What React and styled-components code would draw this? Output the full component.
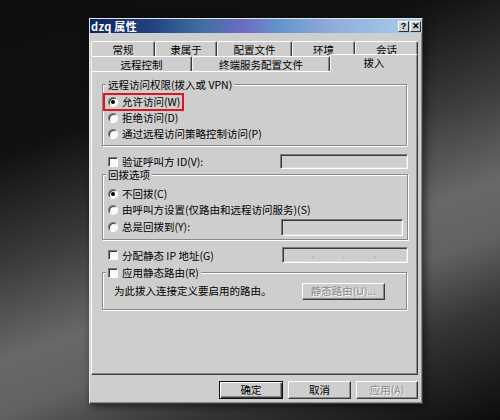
import React from 'react'
import styled, { createGlobalStyle, css } from 'styled-components'

const Global = createGlobalStyle`
  html, body { margin: 0; padding: 0; }
  #root { width: 500px; height: 420px; }
`;

const FACE = '#cecece';

const Desktop = styled.div`
  width: 500px;
  height: 420px;
  box-sizing: border-box;
  padding: 18px 0 0 89px;
  overflow: hidden;
  background: linear-gradient(160deg, #0e0e0e 0%, #111 26%, #3a3a3a 44%, #686868 60%, #626262 69%, #363636 81%, #0c0c0e 100%);
  font-family: "Noto Sans CJK SC", "Liberation Sans", sans-serif;
  font-size: 10.5px;
  color: #000;
`;

const Dialog = styled.div`
  width: 334px;
  height: 386px;
  box-sizing: border-box;
  background: ${FACE};
  border: 1px solid;
  border-color: #e6e6e6 #3c3c3c #3c3c3c #e6e6e6;
  box-shadow: inset -1px -1px 0 #888, 2px 3px 8px rgba(0, 0, 0, 0.55);
  display: flex;
  flex-direction: column;
`;

const TitleBar = styled.div`
  height: 14px;
  display: flex;
  align-items: center;
  padding: 0 1px 0 1px;
  background: linear-gradient(90deg, #0c2468 0%, #22407e 18%, #3f6fa4 34%, #6c6cc4 46%, #6497cf 58%, #8aa7d6 70%, #96b7de 80%, #a8cdee 100%);
`;

const Title = styled.span`
  flex: 1;
  color: #fff;
  font-weight: bold;
  font-size: 11px;
  line-height: 14px;
  letter-spacing: 0.3px;
`;

const CaptionButton = styled.span`
  width: 11px;
  height: 11px;
  box-sizing: border-box;
  background: ${FACE};
  border: 1px solid;
  border-color: #fff #303030 #303030 #fff;
  display: flex;
  align-items: center;
  justify-content: center;
  font-family: "Liberation Sans", sans-serif;
  font-weight: bold;
  font-size: 9px;
  line-height: 9px;
  margin-left: ${p => p.gap || 0}px;
`;

const Content = styled.div`
  flex: 1;
  display: flex;
  flex-direction: column;
  padding: 8px 4px 4px 1px;
`;

const TabRow = styled.div`
  display: flex;
  height: 15px;
`;

const Tab = styled.div`
  width: ${p => p.w}px;
  height: 15px;
  box-sizing: border-box;
  border-top: 1px solid #fff;
  border-left: 1px solid #f4f4f4;
  border-right: 1px solid #3a3a3a;
  border-radius: 2px 2px 0 0;
  box-shadow: inset -1px 0 0 #8a8a8a;
  display: flex;
  align-items: center;
  justify-content: center;
  line-height: 13px;
  padding-top: 1px;
  background: ${FACE};
  ${p => p.active && css`
    align-self: flex-start;
    height: 19px;
    margin-top: -2px;
    z-index: 1;
    align-items: flex-start;
    padding-top: 1px;
  `}
`;

const Panel = styled.div`
  height: 304px;
  box-sizing: border-box;
  border: 1px solid;
  border-color: #fff #3a3a3a #3a3a3a #fff;
  box-shadow: inset -1px -1px 0 #8a8a8a;
  padding: 12px 9px 0 10px;
  display: flex;
  flex-direction: column;
`;

const Group = styled.div`
  position: relative;
  height: ${p => p.h}px;
  box-sizing: border-box;
  margin-top: ${p => p.mt || 0}px;
  width: ${p => p.w || 305}px;
  border: 1px solid #8a8a8a;
  box-shadow: inset 1px 1px 0 #fff, 1px 1px 0 #fff;
  padding: ${p => p.pt}px 0 0 5px;
  display: flex;
  flex-direction: column;
`;

const GroupLabel = styled.div`
  position: absolute;
  top: -6px;
  left: 3px;
  height: 12px;
  padding: 0 2px;
  background: ${FACE};
  line-height: 12px;
  display: flex;
  align-items: center;
  gap: 4px;
`;

const Option = styled.div`
  display: flex;
  align-items: center;
  gap: 4px;
  height: ${p => p.h || 16}px;
  line-height: 14px;
  ${p => p.highlight && css`
    align-self: flex-start;
    height: 14px;
    border: 2px solid #e4141c;
    margin: -1px 0 -1px -5px;
    padding: 0 2px 0 3px;
  `}
`;

const Radio = styled.span`
  width: 10px;
  height: 10px;
  flex: none;
  box-sizing: border-box;
  border-radius: 50%;
  background: #fafafa;
  border: 1px solid;
  border-color: #7a7a7a #fff #fff #7a7a7a;
  box-shadow: inset 1px 1px 0 #3a3a3a;
  display: flex;
  align-items: center;
  justify-content: center;
  &::after {
    content: '';
    width: 4px;
    height: 4px;
    border-radius: 50%;
    background: ${p => (p.checked ? '#000' : 'transparent')};
  }
`;

const Check = styled.span`
  width: 10px;
  height: 10px;
  flex: none;
  box-sizing: border-box;
  background: #fafafa;
  border: 1px solid;
  border-color: #7a7a7a #fff #fff #7a7a7a;
  box-shadow: inset 1px 1px 0 #3a3a3a;
`;

const Row = styled.div`
  display: flex;
  align-items: center;
  height: ${p => p.h || 16}px;
  margin-top: ${p => p.mt || 0}px;
  padding-left: 6px;
  line-height: 13px;
`;

const RowText = styled.span`
  flex: 1;
  margin-left: ${p => (p.flush ? 0 : 4)}px;
`;

const Field = styled.div`
  width: ${p => p.w}px;
  height: ${p => p.h || 15}px;
  margin-right: ${p => p.mr || 0}px;
  box-sizing: border-box;
  background: ${FACE};
  border: 1px solid;
  border-color: #7a7a7a #fff #fff #7a7a7a;
  box-shadow: inset 1px 1px 0 #3a3a3a, inset -1px -1px 0 #dcdcdc;
  display: flex;
  align-items: center;
`;

const IpPart = styled.span`
  flex: 1;
  text-align: right;
  color: #9a9a9a;
  font-size: 9px;
  line-height: 10px;
  &:last-child { visibility: hidden; }
`;

const RouteRow = styled.div`
  display: flex;
  align-items: center;
  justify-content: space-between;
  height: 16px;
  padding: 0 21px 0 6px;
  line-height: 14px;
`;

const Button = styled.div`
  width: ${p => p.w}px;
  height: ${p => p.h || 18}px;
  box-sizing: border-box;
  background: ${FACE};
  border: 1px solid;
  border-color: #fff #3a3a3a #3a3a3a #fff;
  box-shadow: inset -1px -1px 0 #8a8a8a;
  display: flex;
  align-items: center;
  justify-content: center;
  line-height: 14px;
  ${p => p.primary && css`
    border-color: #111;
    box-shadow: inset 1px 1px 0 #fff, inset -1px -1px 0 #3a3a3a, inset -2px -2px 0 #8a8a8a;
  `}
  ${p => p.disabled && css`
    color: #8c8c8c;
    text-shadow: 1px 1px 0 #f4f4f4;
  `}
`;

const Footer = styled.div`
  display: flex;
  justify-content: flex-end;
  gap: 5px;
  margin-top: 6px;
`;

const topTabs = [
  ['常规', 64],
  ['隶属于', 62],
  ['配置文件', 75],
  ['环境', 63],
  ['会话', 63],
];

const bottomTabs = [
  ['远程控制', 101],
  ['终端服务配置文件', 138],
  ['拨入', 88, true],
];

const App = () => {
  return (
    <Desktop>
      <Global />
      <Dialog>
        <TitleBar>
          <Title>dzq 属性</Title>
          <CaptionButton>?</CaptionButton>
          <CaptionButton gap={1}>✕</CaptionButton>
        </TitleBar>
        <Content>
          <TabRow>
            {topTabs.map(([t, w]) => <Tab key={t} w={w}>{t}</Tab>)}
          </TabRow>
          <TabRow>
            {bottomTabs.map(([t, w, a]) => <Tab key={t} w={w} active={a}>{t}</Tab>)}
          </TabRow>
          <Panel>
            <Group h={62} pt={9}>
              <GroupLabel>远程访问权限(拨入或 VPN)</GroupLabel>
              <Option highlight><Radio checked />允许访问(W)</Option>
              <Option><Radio />拒绝访问(D)</Option>
              <Option><Radio />通过远程访问策略控制访问(P)</Option>
            </Group>

            <Row h={15} mt={8}>
              <Check />
              <RowText>验证呼叫方 ID(V):</RowText>
              <Field w={128} />
            </Row>

            <Group h={66} pt={11} mt={5} w={306}>
              <GroupLabel>回拨选项</GroupLabel>
              <Option><Radio checked />不回拨(C)</Option>
              <Option><Radio />由呼叫方设置(仅路由和远程访问服务)(S)</Option>
              <Option h={18}>
                <Radio />
                <RowText flush>总是回拨到(Y):</RowText>
                <Field w={122} h={17} mr={4} />
              </Option>
            </Group>

            <Row mt={7}>
              <Check />
              <RowText>分配静态 IP 地址(G)</RowText>
              <Field w={126} h={16}>
                <IpPart>.</IpPart>
                <IpPart>.</IpPart>
                <IpPart>.</IpPart>
                <IpPart>.</IpPart>
              </Field>
            </Row>

            <Group h={38} pt={10} mt={9}>
              <GroupLabel><Check />应用静态路由(R)</GroupLabel>
              <RouteRow>
                为此拨入连接定义要启用的路由。
                <Button w={83} h={17} disabled>静态路由(U)...</Button>
              </RouteRow>
            </Group>
          </Panel>
          <Footer>
            <Button w={64} primary>确定</Button>
            <Button w={63}>取消</Button>
            <Button w={62} disabled>应用(A)</Button>
          </Footer>
        </Content>
      </Dialog>
    </Desktop>
  )
}

export default App;
